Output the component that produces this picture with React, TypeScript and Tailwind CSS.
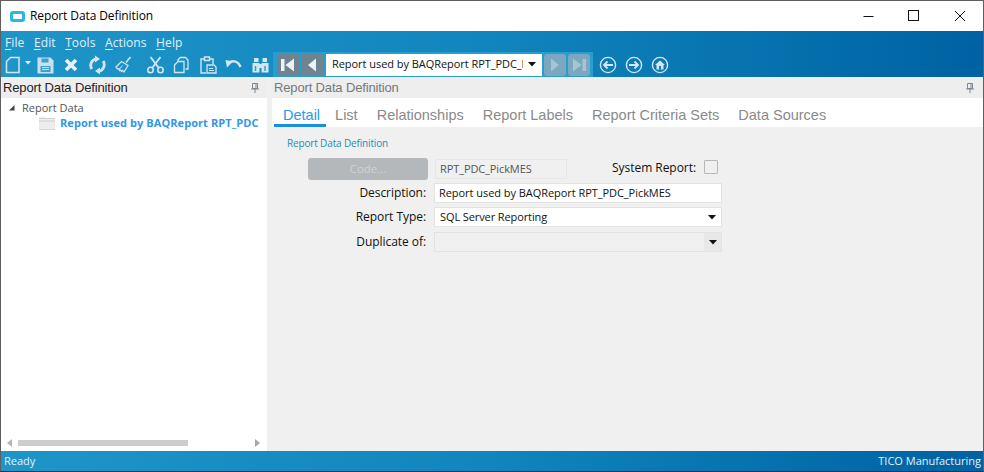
import React from "react";

const seg = { fontFamily: '"Open Sans", "Noto Sans", sans-serif' };

function Ic({ children, w = 17, ml = 0 }: { children: React.ReactNode; w?: number; ml?: number }) {
  return (
    <svg width={w} height="20" viewBox={`0 0 ${w} 20`} fill="none" stroke="#d3e6f1" strokeWidth="1.6" className="shrink-0" style={{ marginLeft: ml }}>
      {children}
    </svg>
  );
}

function Menu({ k, r }: { k: string; r: string }) {
  return (
    <span>
      <span className="underline underline-offset-2">{k}</span>
      {r}
    </span>
  );
}

function NavBtn({ dis, children }: { dis?: boolean; children: React.ReactNode }) {
  return (
    <div className={`w-[22px] h-[22px] rounded-[3px] flex items-center justify-center shrink-0 ${dis ? "bg-[#7ba7bf]" : "bg-[#6f8490]"}`}>
      <svg width="18" height="18" viewBox="0 0 18 18" fill={dis ? "#a7c4d3" : "#eef2f4"}>
        {children}
      </svg>
    </div>
  );
}

function Circ({ children }: { children: React.ReactNode }) {
  return (
    <svg width="18" height="18" viewBox="0 0 18 18" fill="none" stroke="#d5e7f1" strokeWidth="1.4">
      <circle cx="9" cy="9" r="7.6" />
      {children}
    </svg>
  );
}

function Tab({ t, on }: { t: string; on?: boolean }) {
  return (
    <div className={`h-[29px] pt-[8px] flex items-center border-b-[3px] whitespace-nowrap leading-none ${on ? "pl-[9.500px] pr-[5.500px] border-[#1a8fe0] text-[#2f97e6]" : "px-[9.500px] border-transparent text-[#8a8a8a]"}`}>
      {t}
    </div>
  );
}

function Pin() {
  return (
    <svg width="10" height="12" viewBox="0 0 10 12" fill="none" stroke="#7d8790" strokeWidth="1">
      <path d="M2.5 1.5h5v5h-5zM6 1.5v5M1 7h8M5 7v4" />
    </svg>
  );
}

function Arrow() {
  return (
    <svg width="8" height="5" viewBox="0 0 8 5" fill="#111">
      <path d="M0 0h8L4 4.500z" />
    </svg>
  );
}

export default function App() {
  return (
    <div className="w-[984px] h-[472px] flex flex-col overflow-hidden bg-white border border-[#5f5f5f] border-b-[#2b2b2b] text-black" style={seg}>
      {/* Title bar */}
      <div className="h-[30px] shrink-0 flex items-center bg-white">
        <div className="w-[15px] h-[11px] ml-[9px] rounded-[3px] bg-[#2fb4e6] flex items-center justify-center">
          <div className="w-[9px] h-[5px] rounded-[1px] bg-white" />
        </div>
        <div className="ml-[5px] text-[12px] tracking-[-0.1px]">Report Data Definition</div>
        <div className="ml-auto flex items-center">
          <svg width="12" height="12" viewBox="0 0 12 12" stroke="#111" fill="none" className="mr-[33px]">
            <path d="M0.5 6.5h10" />
          </svg>
          <svg width="12" height="12" viewBox="0 0 12 12" stroke="#111" fill="none" className="mr-[34px]">
            <rect x="0.500" y="0.500" width="10" height="10" />
          </svg>
          <svg width="12" height="12" viewBox="0 0 12 12" stroke="#111" fill="none" className="mr-[17px]">
            <path d="M1 1l10 10M11 1L1 11" />
          </svg>
        </div>
      </div>

      {/* Blue band */}
      <div className="h-[46px] shrink-0 bg-gradient-to-r from-[#1e95c9] via-[#1185bd] to-[#0062a2] flex flex-col">
        <div className="h-[21px] flex items-end pl-[4px] gap-[9.500px] text-[12px] tracking-[0.1px] text-[#e3f0f7] leading-[18px]">
          <Menu k="F" r="ile" />
          <Menu k="E" r="dit" />
          <Menu k="T" r="ools" />
          <Menu k="A" r="ctions" />
          <Menu k="H" r="elp" />
        </div>
        <div className="flex-1 flex items-center pl-[4px]">
          {/* New */}
          <Ic w={16}>
            <path d="M5.500 2.500h8.500v15H1.500V6.500z" strokeWidth="1.500" />
          </Ic>
          <svg width="6" height="4" viewBox="0 0 6 4" fill="#e5f0f6" className="ml-[4px] -mt-[3px] shrink-0">
            <path d="M0 0h6L3 3.500z" />
          </svg>
          {/* Save */}
          <Ic w={17} ml={6}>
            <path d="M0.500 2.500h13l3 3v13H.5z" fill="#c9e0ed" stroke="none" />
            <path d="M4.500 3.500h7v4h-7zM3.500 11h10v6h-10z" fill="#3d9fcc" stroke="none" />
            <path d="M5 12.500h7M5 14.500h7" stroke="#c9e0ed" strokeWidth="1" />
          </Ic>
          {/* Delete */}
          <Ic w={16} ml={9}>
            <path d="M3 5l10 10M13 5L3 15" strokeWidth="3.600" stroke="#e7f1f6" />
          </Ic>
          {/* Refresh */}
          <Ic w={17} ml={10}>
            <path d="M2.800 14A6.800 6.800 0 0 1 7 3.800M14.200 6a6.800 6.800 0 0 1-4.200 10.200" strokeWidth="2.800" />
            <path d="M6 .5l5 3.500-5 3.500zM11 12.500L6 16l5 3.500z" fill="#d3e6f1" stroke="none" />
          </Ic>
          {/* Clear */}
          <Ic w={17} ml={9}>
            <path d="M11 7.500l4.500-5.500" strokeWidth="1.600" />
            <path d="M1 12l5.500-5.500 6.500 4-4 6.500-1.500-1.500-1 1-1-1.500-1 .5-.500-2-1.500.5z" strokeWidth="1.300" />
            <path d="M4.500 14l3-3.500" strokeWidth="1" />
          </Ic>
          {/* Cut */}
          <Ic w={17} ml={15}>
            <path d="M3.500 2l8 10.500M13.500 2l-8 10.500" strokeWidth="1.900" />
            <circle cx="3.500" cy="15" r="2.700" />
            <circle cx="13.500" cy="15" r="2.700" />
          </Ic>
          {/* Copy */}
          <Ic w={16} ml={9}>
            <path d="M7 2.500h5.500l2.500 2.500v9h-2.500M7 2.500L5 5v1.500M1.500 10l3.500-3.500h6v11H1.500z" strokeWidth="1.300" />
          </Ic>
          {/* Paste */}
          <Ic w={17} ml={11}>
            <path d="M4 4H1v14h5M10 4h3v5M4.500 2h5v3.500h-5z" strokeWidth="1.400" />
            <path d="M7 10h7l2 2v6H7z" strokeWidth="1.300" />
            <path d="M9 13.500h4M9 15.500h5" strokeWidth="1" />
          </Ic>
          {/* Undo */}
          <Ic w={17} ml={8}>
            <path d="M3 9c3-4 10-4 12.500 3" strokeWidth="2.400" />
            <path d="M.5 5l7.500 1.500-6 6z" fill="#d3e6f1" stroke="none" />
          </Ic>
          {/* Find */}
          <Ic w={17} ml={10}>
            <path d="M2 3h4.500v4H2zM10.500 3H15v4h-4.500zM.5 8h7v9.500h-7zM9.500 8h7v9.500h-7z" fill="#d3e6f1" stroke="none" />
            <path d="M7 9h3v4H7z" fill="#d3e6f1" stroke="none" />
            <path d="M3.500 11v5M13 11v5" stroke="#3b9ccb" strokeWidth="1.500" />
          </Ic>
          <div className="ml-[4px] self-end h-[25px] w-[320px] bg-[#2a9dcf] flex items-center gap-[2px] pl-[4px] shrink-0">
            <NavBtn>
              <path d="M2 3h3.500v12H2zM15 2.500v13L6.500 9z" />
            </NavBtn>
            <NavBtn>
              <path d="M13 2.500v13L5 9z" />
            </NavBtn>
            <div className="w-[216px] h-[22px] ml-[1px] bg-white flex items-center text-[11px] pl-[6px] pr-[6px] text-[#111] shrink-0">
              <span className="w-[191px] overflow-hidden whitespace-nowrap tracking-[-0.05px]">Report used by BAQReport RPT_PDC_PickMES</span>
              <span className="ml-[5px]"><Arrow /></span>
            </div>
            <NavBtn dis>
              <path d="M5 2.500v13L13 9z" />
            </NavBtn>
            <NavBtn dis>
              <path d="M3 2.500v13L11.500 9zM12.500 3H16v12h-3.500z" />
            </NavBtn>
          </div>
          <div className="ml-[6px] flex items-center gap-[8px]">
            <Circ>
              <path d="M14 9H5M8.500 5.500L5 9l3.500 3.500" strokeWidth="1.800" />
            </Circ>
            <Circ>
              <path d="M4 9h9M9.500 5.500L13 9l-3.500 3.500" strokeWidth="1.800" />
            </Circ>
            <Circ>
              <path d="M4 9l5-4.500L14 9h-1.500v4.500h-7V9z" fill="#d5e7f1" stroke="none" />
              <path d="M8 10h2v3.500H8z" fill="#1a7db5" stroke="none" />
            </Circ>
          </div>
        </div>
      </div>

      {/* Main */}
      <div className="flex-1 flex min-h-0 bg-[#f0f0f0]">
        <div className="w-[266px] shrink-0 flex flex-col bg-white">
          <div className="h-[21px] shrink-0 bg-[#eeeeee] flex items-center justify-between pl-[2px] pr-[7px] text-[13px] text-[#222]" style={{ fontFamily: '"Liberation Sans", sans-serif' }}>
            <span className="tracking-[-0.15px]">Report Data Definition</span>
            <Pin />
          </div>
          <div className="flex-1 pt-[2px] pl-[7px] text-[11px] leading-[15px]">
            <div className="flex items-center h-[15px]">
              <svg width="7" height="7" viewBox="0 0 7 7" fill="#444">
                <path d="M6.500 1v5.500H1z" />
              </svg>
              <span className="ml-[7px] text-[#555]">Report Data</span>
            </div>
            <div className="flex items-center h-[15px] pl-[31px]">
              <svg width="16" height="14" viewBox="0 0 16 14" fill="none">
                <path d="M0 1h6l1 1h9v12H0z" fill="#ededed" />
                <path d="M0 5h16M0 2.500h16" stroke="#cfcfcf" />
                <path d="M0 13.500h16" stroke="#d8d8d8" />
              </svg>
              <span className="ml-[5px] font-bold text-[#2f97e6] whitespace-nowrap tracking-[0.07px]">Report used by BAQReport RPT_PDC</span>
            </div>
          </div>
          <div className="h-[16px] shrink-0 flex items-center pl-[6px] pr-[7px]">
            <svg width="5" height="8" viewBox="0 0 5 8" fill="#b5b5b5"><path d="M5 0v8L0 4z" /></svg>
            <div className="ml-[6px] w-[170px] h-[6px] bg-[#cdcdcd]" />
            <svg width="5" height="8" viewBox="0 0 5 8" fill="#a8a8a8" className="ml-auto"><path d="M0 0v8l5-4z" /></svg>
          </div>
        </div>

        <div className="w-[5px] shrink-0" />

        <div className="flex-1 flex flex-col min-w-0">
          <div className="h-[21px] shrink-0 bg-[#eeeeee] flex items-center justify-between pl-[2px] pr-[8px] text-[13px] text-[#777]" style={{ fontFamily: '"Liberation Sans", sans-serif' }}>
            <span className="tracking-[-0.15px]">Report Data Definition</span>
            <Pin />
          </div>
          <div className="h-[29px] shrink-0 bg-white flex items-stretch pl-[1.500px] text-[14.500px]" style={{ fontFamily: '"Liberation Sans", sans-serif' }}>
            <Tab t="Detail" on />
            <Tab t="List" />
            <Tab t="Relationships" />
            <Tab t="Report Labels" />
            <Tab t="Report Criteria Sets" />
            <Tab t="Data Sources" />
          </div>
          <div className="flex-1 pl-[15px] pt-[10px] text-[#111]">
            <div className="text-[10px] leading-[13px] text-[#1f8db5] tracking-[-0.15px]">Report Data Definition</div>
            <div className="mt-[8px] w-[435px] flex flex-col gap-[2px] text-[12px]">
              <div className="flex items-center h-[22px]">
                <div className="ml-[21px] w-[120px] h-[22px] rounded-[3px] bg-[#b4b8bb] flex items-center justify-center text-[11.500px] text-[#cfd2d4]">Code...</div>
                <div className="ml-[7px] w-[132px] h-[20px] border border-[#e6e6e6] bg-[#f0f0f0] flex items-center pl-[4px] text-[11px] text-[#555] tracking-[-0.1px]">RPT_PDC_PickMES</div>
                <div className="ml-auto flex items-center -mt-[3px]">
                  <span className="tracking-[-0.05px]">System Report:</span>
                  <div className="ml-[8px] mr-[4px] -mt-[1px] w-[14px] h-[14px] border border-[#b8b8b8] rounded-[1px]" />
                </div>
              </div>
              <Row label="Description:">
                <div className="h-[20px] bg-white border border-[#e3e3e3] flex items-center pl-[4px] text-[11px] tracking-[-0.05px]">Report used by BAQReport RPT_PDC_PickMES</div>
              </Row>
              <Row label="Report Type:">
                <div className="h-[20px] bg-white border border-[#e3e3e3] flex items-center justify-between pl-[5px] pr-[5px] text-[11px] tracking-[-0.1px]">
                  SQL Server Reporting
                  <Arrow />
                </div>
              </Row>
              <div className="h-[1px] -mb-[2px]" />
              <Row label="Duplicate of:">
                <div className="h-[20px] bg-[#f0f0f0] border border-[#e3e3e3] flex items-center justify-end">
                  <div className="w-[17px] h-full bg-[#e8e8e8] flex items-center justify-center"><Arrow /></div>
                </div>
              </Row>
            </div>
          </div>
        </div>
      </div>

      {/* Status bar */}
      <div className="h-[20px] shrink-0 bg-gradient-to-r from-[#1e95c9] via-[#1185bd] to-[#0062a2] flex items-center justify-between pl-[3px] pr-[2px] text-[11px] text-[#e6f1f7]">
        <span>Ready</span>
        <span>TICO Manufacturing</span>
      </div>
    </div>
  );
}

function Row({ label, children }: { label: string; children: React.ReactNode }) {
  return (
    <div className="flex items-center h-[22px]">
      <div className="w-[141px] text-right pr-[2px] whitespace-nowrap tracking-[-0.05px]">{label}</div>
      <div className="ml-[6px] w-[288px]">{children}</div>
    </div>
  );
}
